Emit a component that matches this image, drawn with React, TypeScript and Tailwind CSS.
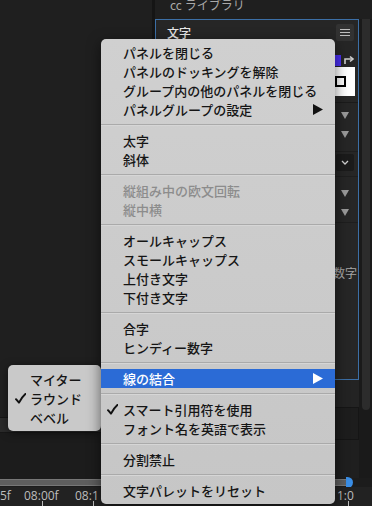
import React from "react";

type Item = { label: string; disabled?: boolean; checked?: boolean; sub?: boolean; active?: boolean };

const groups: Item[][] = [
  [
    { label: "パネルを閉じる" },
    { label: "パネルのドッキングを解除" },
    { label: "グループ内の他のパネルを閉じる" },
    { label: "パネルグループの設定", sub: true },
  ],
  [{ label: "太字" }, { label: "斜体" }],
  [
    { label: "縦組み中の欧文回転", disabled: true },
    { label: "縦中横", disabled: true },
  ],
  [
    { label: "オールキャップス" },
    { label: "スモールキャップス" },
    { label: "上付き文字" },
    { label: "下付き文字" },
  ],
  [{ label: "合字" }, { label: "ヒンディー数字" }],
  [{ label: "線の結合", sub: true, active: true }],
  [{ label: "スマート引用符を使用", checked: true }, { label: "フォント名を英語で表示" }],
  [{ label: "分割禁止" }],
  [{ label: "文字パレットをリセット" }],
];

const Check = ({ color = "#111" }: { color?: string }) => (
  <svg width="11" height="11" viewBox="0 0 11 11">
    <path d="M1 6.2 L4 9.6 Q6.5 4.5 10.4 1" fill="none" stroke={color} strokeWidth="2" strokeLinecap="round" strokeLinejoin="round" />
  </svg>
);

const Arrow = ({ color }: { color: string }) => (
  <svg width="10" height="11" viewBox="0 0 10 11">
    <path d="M0 0 L10 5.5 L0 11 Z" fill={color} />
  </svg>
);

const Down = () => (
  <svg width="8" height="7" viewBox="0 0 8 7">
    <path d="M0 0 L8 0 L4 7 Z" fill="#9a9a9a" />
  </svg>
);

function Sep() {
  return (
    <div className="flex h-[12px] flex-col justify-center">
      <div className="h-px bg-[#aaaaaa]" />
      <div className="h-px bg-[#d6d6d6]" />
    </div>
  );
}

function Row({ item }: { item: Item }) {
  const text = item.active ? "text-white" : item.disabled ? "text-[#8c8c8c]" : "text-[#151515]";
  return (
    <div className={`flex h-[19px] items-center ${item.active ? "bg-[#2b6bd6]" : ""} ${text}`}>
      <div className="flex w-[22px] justify-end pr-[5px]">{item.checked && <Check />}</div>
      <span className="flex-1 text-[13px] font-medium leading-none">{item.label}</span>
      {item.sub && (
        <div className="mr-[12px]">
          <Arrow color={item.active ? "#ffffff" : "#111111"} />
        </div>
      )}
    </div>
  );
}

export default function App() {
  return (
    <div className="relative h-[506px] w-[372px] overflow-hidden bg-[#1f1f1f] font-['Noto_Sans_CJK_JP','Noto_Sans',sans-serif]">
      {/* background workspace */}
      <div className="flex h-[478px]">
        <div className="flex w-[152px] flex-col">
          <div className="flex-1 bg-[#1f1f1f]" />
          <div className="h-[15px] border-t border-[#151515] bg-[#2b2b2b]" />
          <div className="h-[46px] border-t border-[#171717] bg-[#1c1c1c]" />
        </div>
        <div className="w-[3px] bg-[#151515]" />
        <div className="flex flex-1 flex-col">
          <div className="h-[19px] overflow-hidden pl-[15px]">
            <div className="-mt-[3px] text-[12px] leading-[16px] text-[#a8a8a8]">cc ライブラリ</div>
          </div>
          <div className="flex flex-1">
            <div className="flex w-[204px] flex-col">
              <div className="flex h-[361px] flex-col border border-[#3c6fa6] bg-[#262626]">
                <div className="flex h-[25px] items-center justify-between pl-[11px] pr-[4px]">
                  <span className="text-[12px] font-medium text-[#e8e8e8]">文字</span>
                  <div className="flex h-[17px] w-[18px] flex-col items-center justify-center gap-[2px] rounded-[2px] bg-[#323232]">
                    <div className="h-px w-[10px] bg-[#bdbdbd]" />
                    <div className="h-px w-[10px] bg-[#bdbdbd]" />
                    <div className="h-px w-[10px] bg-[#bdbdbd]" />
                  </div>
                </div>
                <div className="flex h-[57px] justify-end pr-[3px] pt-[10px]">
                  <div className="flex w-[26px] flex-col">
                    <div className="flex h-[12px] items-start justify-between">
                      <div className="ml-[5px] h-[11px] w-[7px] bg-[#4a2ff2]" />
                      <svg width="12" height="12" viewBox="0 0 12 12">
                        <path d="M2 9 V4 H9" fill="none" stroke="#d0d0d0" strokeWidth="1.6" />
                        <path d="M7 1.5 L10 4 L7 6.5" fill="none" stroke="#d0d0d0" strokeWidth="1.6" />
                      </svg>
                    </div>
                    <div className="flex h-[29px] items-center bg-white pl-[6px]">
                      <div className="h-[11px] w-[11px] border-2 border-black" />
                    </div>
                  </div>
                </div>
                <div className="flex flex-col items-end border-t border-[#1b1b1b] pr-[9px] pt-[3px]">
                  <div className="flex h-[19px] items-center"><Down /></div>
                  <div className="flex h-[19px] items-center"><Down /></div>
                </div>
                <div className="mt-[7px] flex justify-end border-t border-[#1e1e1e] pr-[4px] pt-[2px]">
                  <div className="flex h-[17px] w-[18px] items-center justify-center rounded-[2px] bg-[#1b1b1b]">
                    <svg width="8" height="5" viewBox="0 0 8 5">
                      <path d="M1 1 L4 4 L7 1" fill="none" stroke="#d0d0d0" strokeWidth="1.3" />
                    </svg>
                  </div>
                </div>
                <div className="mt-[5px] flex flex-col items-end border-t border-[#1e1e1e] pr-[9px] pt-[7px]">
                  <div className="flex h-[19px] items-center"><Down /></div>
                  <div className="flex h-[19px] items-center"><Down /></div>
                </div>
                <div className="flex flex-1 justify-end border-t border-[#1e1e1e] pr-[1px] pt-[40px]">
                  <span className="h-[19px] text-[12px] leading-[19px] text-[#a6a6a6]">数字</span>
                </div>
              </div>
              <div className="h-[27px] bg-[#232323]" />
              <div className="h-[33px] border border-[#151515] bg-[#1d1d1d]" />
              <div className="flex-1 bg-[#1f1f1f]" />
            </div>
            <div className="flex w-[13px] flex-col bg-[#1a1a1a] pl-[3px] pr-[2px]">
              <div className="h-[391px] rounded-b-[4px] bg-[#2c2c2c]" />
            </div>
          </div>
        </div>
      </div>

      {/* timeline bar */}
      <div className="flex h-[9px] items-center bg-[#1c1c1c]">
        <div className="h-[7px] w-[346px] border-y border-[#777] bg-[#5e5e5e]" />
        <div className="h-[11px] w-[7px] rounded-r-full bg-[#3a8ee6]" />
      </div>
      <div className="relative h-[19px] bg-[#222222] font-['Open_Sans',sans-serif] text-[12px] text-[#bdbdbd]">
        <span className="absolute left-0 top-[1px] leading-[16px]">5f</span>
        <span className="absolute left-[24px] top-[1px] leading-[16px]">08:00f</span>
        <span className="absolute left-[75px] top-[1px] leading-[16px]">08:1</span>
        <span className="absolute left-[337px] top-[1px] leading-[16px]">1:0</span>
        <div className="absolute bottom-0 left-[42px] h-[5px] w-px bg-[#bdbdbd]" />
        <div className="absolute bottom-0 left-[93px] h-[5px] w-px bg-[#bdbdbd]" />
        <div className="absolute bottom-0 left-[348px] h-[5px] w-px bg-[#bdbdbd]" />
      </div>

      {/* submenu */}
      <div className="absolute left-[8px] top-[365px] h-[66px] w-[93px] rounded-[5px] bg-[#c9c9c9] pt-[5px] shadow-[0_2px_8px_rgba(0,0,0,0.5)]">
        {[
          { label: "マイター" },
          { label: "ラウンド", checked: true },
          { label: "ベベル" },
        ].map((s) => (
          <div key={s.label} className="flex h-[19px] items-center text-[#151515]">
            <div className="flex w-[22px] justify-end pr-[4px]">{s.checked && <Check />}</div>
            <span className="text-[13px] font-medium leading-none">{s.label}</span>
          </div>
        ))}
      </div>

      {/* main menu */}
      <div className="absolute left-[101px] top-[39px] h-[465px] w-[234px] rounded-[5px] bg-gradient-to-b from-[#d0d0d0] to-[#c6c6c6] pt-[4px] shadow-[0_4px_14px_rgba(0,0,0,0.55)]">
        {groups.map((g, i) => (
          <div key={i}>
            {i > 0 && <Sep />}
            {g.map((it) => (
              <Row key={it.label} item={it} />
            ))}
          </div>
        ))}
      </div>
    </div>
  );
}
